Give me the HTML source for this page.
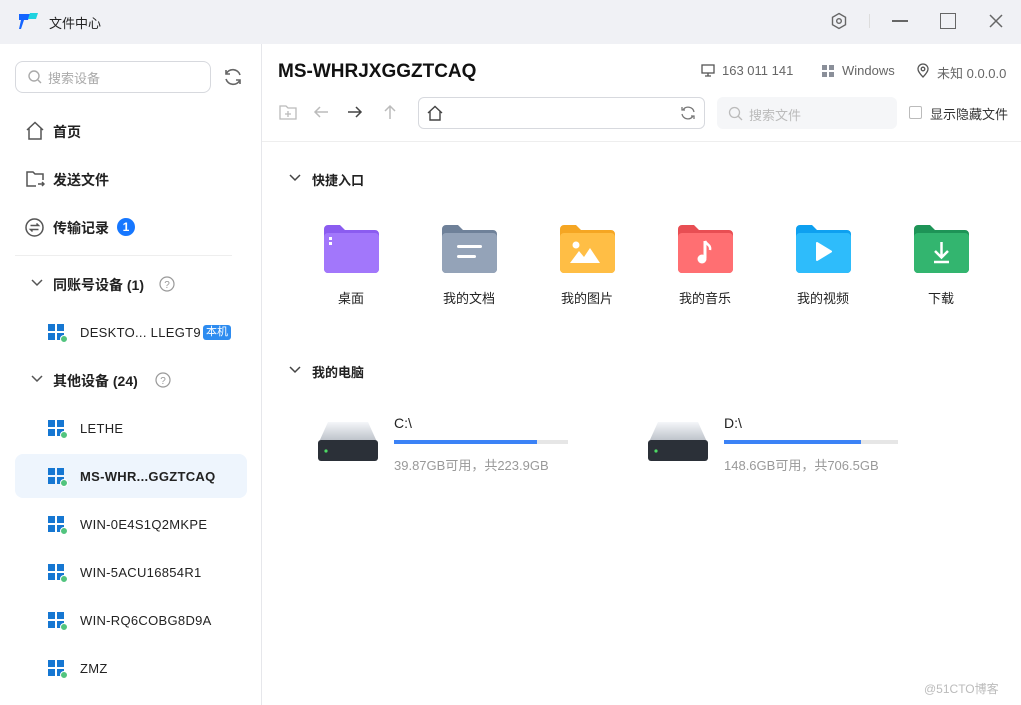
<!DOCTYPE html>
<html><head><meta charset="utf-8"><style>
*{margin:0;padding:0;box-sizing:border-box}
body{width:1021px;height:705px;overflow:hidden;background:#fff;font-family:"Liberation Sans","Noto Sans CJK SC",sans-serif;color:#222;position:relative;font-size:13px}
.a{position:absolute}
.tb{left:0;top:0;width:1021px;height:44px;background:#f0f1f5}
.side{left:0;top:44px;width:262px;height:661px;border-right:1px solid #e6e7eb}
.nav{font-size:14px;font-weight:bold;color:#222}
.dev{font-size:13px;color:#222;letter-spacing:.3px}
.win{width:16px;height:16px;display:grid;grid-template-columns:7px 7px;gap:2px}
.win i{background:#1677d2;display:block}
.dot{width:8px;height:8px;border-radius:50%;background:#52c47e;border:1px solid #fff}
.lbl{font-size:13px;color:#222;text-align:center;width:100px}
.gray{color:#666}
</style></head><body>
<div class="a tb"></div>
<svg class="a" style="left:18px;top:12px" width="22" height="18"><path d="M1 2h11l-2 6h-4l-3 9h-2l2-9H1z" fill="#1565ff"/><path d="M12 1h8l-2 6h-8z" fill="#1fd3e0"/></svg>
<div class="a" style="left:49px;top:13px;font-size:13px">文件中心</div>
<svg class="a" style="left:830px;top:12px" width="18" height="18" fill="none" stroke="#666" stroke-width="1.4"><path d="M9 1.5l6.5 3.75v7.5L9 16.5l-6.5-3.75v-7.5z"/><circle cx="9" cy="9" r="2.3"/></svg>
<div class="a" style="left:869px;top:14px;width:1px;height:14px;background:#ddd"></div>
<div class="a" style="left:892px;top:20px;width:16px;height:1.5px;background:#666"></div>
<div class="a" style="left:940px;top:13px;width:16px;height:16px;border:1.5px solid #666"></div>
<svg class="a" style="left:988px;top:13px" width="16" height="16" stroke="#666" stroke-width="1.5"><path d="M2 2l12 12M14 2L2 14"/></svg>

<div class="a side"></div>
<div class="a" style="left:15px;top:61px;width:196px;height:32px;border:1px solid #d7d9de;border-radius:8px"></div>
<svg class="a" style="left:27px;top:69px" width="16" height="16" fill="none" stroke="#aaa" stroke-width="1.4"><circle cx="7" cy="7" r="5"/><path d="M11 11l3 3"/></svg>
<div class="a" style="left:48px;top:68px;color:#aaa;font-size:13px">搜索设备</div>
<svg class="a" style="left:222px;top:66px" width="22" height="22" fill="none" stroke="#666" stroke-width="1.6"><path d="M18 9a7.5 7.5 0 0 0-14-1M4 13a7.5 7.5 0 0 0 14 1"/><path d="M4 4v4h4M18 18v-4h-4"/></svg>
<svg class="a" style="left:25px;top:121px" width="20" height="19" fill="none" stroke="#555" stroke-width="1.5"><path d="M2 9L10 1.5 18 9M4 7.5V18h12V7.5"/></svg>
<div class="a nav" style="left:53px;top:122px">首页</div>
<svg class="a" style="left:25px;top:170px" width="20" height="18" fill="none" stroke="#555" stroke-width="1.5"><path d="M11 16H2V2h6l2 2h8v6"/><path d="M13 14h6M17 12l2 2-2 2"/></svg>
<div class="a nav" style="left:53px;top:170px">发送文件</div>
<svg class="a" style="left:25px;top:218px" width="19" height="19" fill="none" stroke="#555" stroke-width="1.5"><circle cx="9.5" cy="9.5" r="8.5"/><path d="M5.5 7.5h8l-2-2M13.5 11.5h-8l2 2"/></svg>
<div class="a nav" style="left:53px;top:218px">传输记录</div>
<div class="a" style="left:117px;top:218px;width:18px;height:18px;border-radius:50%;background:#1677ff;color:#fff;font-size:12px;font-weight:bold;text-align:center;line-height:18px">1</div>
<div class="a" style="left:15px;top:255px;width:217px;height:1px;background:#eee"></div>
<svg class="a" style="left:31px;top:279px" width="12" height="8" fill="none" stroke="#555" stroke-width="1.5"><path d="M1 1l5 5 5-5"/></svg>
<div class="a nav" style="left:53px;top:275px">同账号设备 (1)</div>
<svg class="a" style="left:159px;top:276px" width="16" height="16" fill="none" stroke="#999" stroke-width="1.2"><circle cx="8" cy="8" r="7"/><text x="8" y="12" font-size="10" text-anchor="middle" fill="#999" stroke="none" font-family="Liberation Sans">?</text></svg>
<svg class="a" style="left:31px;top:375px" width="12" height="8" fill="none" stroke="#555" stroke-width="1.5"><path d="M1 1l5 5 5-5"/></svg>
<div class="a nav" style="left:53px;top:371px">其他设备 (24)</div>
<svg class="a" style="left:155px;top:372px" width="16" height="16" fill="none" stroke="#999" stroke-width="1.2"><circle cx="8" cy="8" r="7"/><text x="8" y="12" font-size="10" text-anchor="middle" fill="#999" stroke="none" font-family="Liberation Sans">?</text></svg>
<div class="a" style="left:15px;top:454px;width:232px;height:44px;border-radius:8px;background:#eef5fd"></div>

<div class="a win" style="left:48px;top:324px"><i></i><i></i><i></i><i></i></div><div class="a dot" style="left:60px;top:335px"></div>
<div class="a dev" style="left:80px;top:325px">DESKTO... LLEGT9</div>
<div class="a" style="left:203px;top:325px;background:#2e8cf0;color:#fff;font-size:11px;padding:0 3px;border-radius:3px;line-height:15px">本机</div>
<div class="a win" style="left:48px;top:420px"><i></i><i></i><i></i><i></i></div><div class="a dot" style="left:60px;top:431px"></div>
<div class="a dev" style="left:80px;top:421px">LETHE</div>
<div class="a win" style="left:48px;top:468px"><i></i><i></i><i></i><i></i></div><div class="a dot" style="left:60px;top:479px"></div>
<div class="a dev" style="left:80px;top:469px;font-weight:bold">MS-WHR...GGZTCAQ</div>
<div class="a win" style="left:48px;top:516px"><i></i><i></i><i></i><i></i></div><div class="a dot" style="left:60px;top:527px"></div>
<div class="a dev" style="left:80px;top:517px">WIN-0E4S1Q2MKPE</div>
<div class="a win" style="left:48px;top:564px"><i></i><i></i><i></i><i></i></div><div class="a dot" style="left:60px;top:575px"></div>
<div class="a dev" style="left:80px;top:565px">WIN-5ACU16854R1</div>
<div class="a win" style="left:48px;top:612px"><i></i><i></i><i></i><i></i></div><div class="a dot" style="left:60px;top:623px"></div>
<div class="a dev" style="left:80px;top:613px">WIN-RQ6COBG8D9A</div>
<div class="a win" style="left:48px;top:660px"><i></i><i></i><i></i><i></i></div><div class="a dot" style="left:60px;top:671px"></div>
<div class="a dev" style="left:80px;top:661px">ZMZ</div>

<div class="a" style="left:278px;top:61px;font-size:19px;font-weight:bold;color:#111">MS-WHRJXGGZTCAQ</div>
<svg class="a" style="left:701px;top:64px" width="14" height="13" fill="none" stroke="#555" stroke-width="1.3"><rect x="1" y="1" width="12" height="8"/><path d="M4 12h6M7 9v3"/></svg>
<div class="a gray" style="left:722px;top:63px">163 011 141</div>
<div class="a" style="left:822px;top:65px;width:12px;height:12px;display:grid;grid-template-columns:5px 5px;gap:2px"><i style="background:#8a8f99"></i><i style="background:#8a8f99"></i><i style="background:#8a8f99"></i><i style="background:#8a8f99"></i></div>
<div class="a gray" style="left:842px;top:63px">Windows</div>
<svg class="a" style="left:917px;top:63px" width="12" height="15" fill="none" stroke="#555" stroke-width="1.3"><path d="M6 14S1 9 1 6a5 5 0 0 1 10 0c0 3-5 8-5 8z"/><circle cx="6" cy="6" r="1.8"/></svg>
<div class="a gray" style="left:937px;top:63px">未知 0.0.0.0</div>

<svg class="a" style="left:279px;top:104px" width="18" height="17" fill="none" stroke="#bbb" stroke-width="1.3"><path d="M1 15V2h6l2 2h8v11z"/><path d="M9 7v6M6 10h6"/></svg>
<svg class="a" style="left:313px;top:105px" width="16" height="14" fill="none" stroke="#bbb" stroke-width="1.5"><path d="M15 7H2M7 2L2 7l5 5"/></svg>
<svg class="a" style="left:347px;top:105px" width="16" height="14" fill="none" stroke="#444" stroke-width="1.5"><path d="M1 7h13M9 2l5 5-5 5"/></svg>
<svg class="a" style="left:383px;top:104px" width="14" height="16" fill="none" stroke="#bbb" stroke-width="1.5"><path d="M7 15V2M2 7l5-5 5 5"/></svg>
<div class="a" style="left:418px;top:97px;width:287px;height:32px;border:1px solid #d7d9de;border-radius:6px"></div>
<svg class="a" style="left:427px;top:105px" width="16" height="16" fill="none" stroke="#444" stroke-width="1.4"><path d="M1 8l7-6.5L15 8M3 6.5V15h10V6.5"/></svg>
<svg class="a" style="left:680px;top:105px" width="16" height="16" fill="none" stroke="#777" stroke-width="1.3"><path d="M14 7A6 6 0 0 0 3 5M2 9a6 6 0 0 0 11 2"/><path d="M2 2v3h3M14 14v-3h-3"/></svg>
<div class="a" style="left:717px;top:97px;width:180px;height:32px;border-radius:6px;background:#f5f6f8"></div>
<svg class="a" style="left:728px;top:106px" width="15" height="15" fill="none" stroke="#bbb" stroke-width="1.3"><circle cx="6.5" cy="6.5" r="5"/><path d="M10 10l4 4"/></svg>
<div class="a" style="left:749px;top:105px;color:#bbb">搜索文件</div>
<div class="a" style="left:909px;top:106px;width:13px;height:13px;border:1px solid #bbb;border-radius:2px"></div>
<div class="a" style="left:930px;top:104px;color:#333">显示隐藏文件</div>
<div class="a" style="left:262px;top:141px;width:759px;height:1px;background:#eee"></div>

<svg class="a" style="left:289px;top:174px" width="12" height="8" fill="none" stroke="#444" stroke-width="1.5"><path d="M1 1l5 5 5-5"/></svg>
<div class="a nav" style="left:312px;top:170px;font-size:13px">快捷入口</div>
<svg class="a" style="left:289px;top:366px" width="12" height="8" fill="none" stroke="#444" stroke-width="1.5"><path d="M1 1l5 5 5-5"/></svg>
<div class="a nav" style="left:312px;top:362px;font-size:13px">我的电脑</div>

<svg class="a" style="left:324px;top:225px" width="55" height="48">
<path d="M0 4a4 4 0 0 1 4-4h12l5 5h30a4 4 0 0 1 4 4v35a4 4 0 0 1-4 4H4a4 4 0 0 1-4-4z" fill="#8b5cf0"/><rect x="0" y="8" width="55" height="40" rx="4" fill="#a277fb"/><rect x="5" y="12" width="3" height="3" fill="#fff"/><rect x="5" y="17" width="3" height="3" fill="#fff"/></svg>
<svg class="a" style="left:442px;top:225px" width="55" height="48">
<path d="M0 4a4 4 0 0 1 4-4h12l5 5h30a4 4 0 0 1 4 4v35a4 4 0 0 1-4 4H4a4 4 0 0 1-4-4z" fill="#6f8199"/><rect x="0" y="8" width="55" height="40" rx="4" fill="#94a3b8"/><rect x="15" y="20" width="25" height="3" rx="1.5" fill="#fff"/><rect x="15" y="30" width="19" height="3" rx="1.5" fill="#fff"/></svg>
<svg class="a" style="left:560px;top:225px" width="55" height="48">
<path d="M0 4a4 4 0 0 1 4-4h12l5 5h30a4 4 0 0 1 4 4v35a4 4 0 0 1-4 4H4a4 4 0 0 1-4-4z" fill="#f5a623"/><rect x="0" y="8" width="55" height="40" rx="4" fill="#ffbe45"/><circle cx="16" cy="20" r="3.5" fill="#fff"/><path d="M10 38l9-12 5 6 6-9 10 15z" fill="#fff"/></svg>
<svg class="a" style="left:678px;top:225px" width="55" height="48">
<path d="M0 4a4 4 0 0 1 4-4h12l5 5h30a4 4 0 0 1 4 4v35a4 4 0 0 1-4 4H4a4 4 0 0 1-4-4z" fill="#e84e53"/><rect x="0" y="8" width="55" height="40" rx="4" fill="#ff6f72"/><path d="M27 16v17" stroke="#fff" stroke-width="3"/><circle cx="24" cy="34" r="4.5" fill="#fff"/><path d="M27 16c2 4 6 4 5 9" stroke="#fff" stroke-width="2.5" fill="none"/></svg>
<svg class="a" style="left:796px;top:225px" width="55" height="48">
<path d="M0 4a4 4 0 0 1 4-4h12l5 5h30a4 4 0 0 1 4 4v35a4 4 0 0 1-4 4H4a4 4 0 0 1-4-4z" fill="#0ea0f0"/><rect x="0" y="8" width="55" height="40" rx="4" fill="#2ebcfb"/><path d="M21 18v17l14-8.5z" fill="#fff" stroke="#fff" stroke-width="2" stroke-linejoin="round"/></svg>
<svg class="a" style="left:914px;top:225px" width="55" height="48">
<path d="M0 4a4 4 0 0 1 4-4h12l5 5h30a4 4 0 0 1 4 4v35a4 4 0 0 1-4 4H4a4 4 0 0 1-4-4z" fill="#1e9457"/><rect x="0" y="8" width="55" height="40" rx="4" fill="#33b56f"/><path d="M27.5 17v15M21 26l6.5 6.5L34 26M20 37h15" stroke="#fff" stroke-width="2.5" fill="none"/></svg>
<div class="a lbl" style="left:301px;top:288px">桌面</div>
<div class="a lbl" style="left:419px;top:288px">我的文档</div>
<div class="a lbl" style="left:537px;top:288px">我的图片</div>
<div class="a lbl" style="left:655px;top:288px">我的音乐</div>
<div class="a lbl" style="left:773px;top:288px">我的视频</div>
<div class="a lbl" style="left:891px;top:288px">下载</div>

<svg class="a" style="left:318px;top:420px" width="60" height="42"><defs><linearGradient id="g" x1="0" y1="0" x2="0" y2="1"><stop offset="0" stop-color="#f4f6f9"/><stop offset="1" stop-color="#b9bec6"/></linearGradient></defs><path d="M10 2h40l9 20H1z" fill="url(#g)"/><rect x="0" y="20" width="60" height="21" rx="3" fill="#2b3038"/><circle cx="8" cy="31" r="1.6" fill="#4cd964"/></svg>
<svg class="a" style="left:648px;top:420px" width="60" height="42"><path d="M10 2h40l9 20H1z" fill="url(#g)"/><rect x="0" y="20" width="60" height="21" rx="3" fill="#2b3038"/><circle cx="8" cy="31" r="1.6" fill="#4cd964"/></svg>
<div class="a" style="left:394px;top:415px;font-size:14px">C:\</div>
<div class="a" style="left:394px;top:440px;width:174px;height:4px;background:#e6e6e6"><div style="width:143px;height:4px;background:#3b82f6"></div></div>
<div class="a" style="left:394px;top:455px;color:#999">39.87GB可用，共223.9GB</div>
<div class="a" style="left:724px;top:415px;font-size:14px">D:\</div>
<div class="a" style="left:724px;top:440px;width:174px;height:4px;background:#e6e6e6"><div style="width:137px;height:4px;background:#3b82f6"></div></div>
<div class="a" style="left:724px;top:455px;color:#999">148.6GB可用，共706.5GB</div>
<div class="a" style="left:924px;top:680px;color:#bbb;font-size:12px">@51CTO博客</div>
</body></html>
